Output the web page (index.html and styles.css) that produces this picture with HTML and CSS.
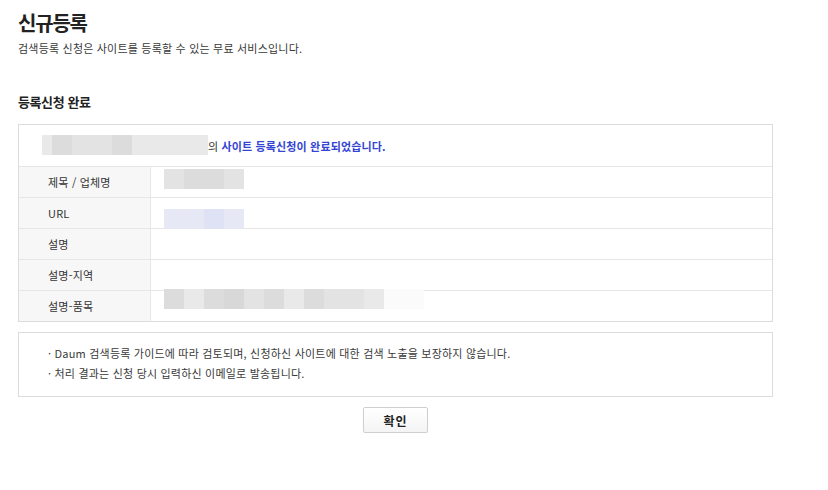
FILE: index.html
```html
<!DOCTYPE html>
<html lang="ko">
<head>
<meta charset="utf-8">
<title>신규등록</title>
<link rel="stylesheet" href="styles.css">
</head>
<body>
<div class="page">
  <h1 class="title">신규등록</h1>
  <p class="desc">검색등록 신청은 사이트를 등록할 수 있는 무료 서비스입니다.</p>

  <h2 class="section">등록신청 완료</h2>

  <div class="result">
    <div class="result-head">
      <span class="pix pix-head">
        <span class="c c3 w10"></span><span class="c c1"></span><span class="c c2"></span><span class="c c2"></span><span class="c c1"></span><span class="c c3"></span><span class="c c3"></span><span class="c c3 w36"></span>
      </span>
      <span class="head-text">의 <strong class="done">사이트 등록신청이 완료되었습니다.</strong></span>
    </div>
    <div class="row">
      <div class="label">제목 / 업체명</div>
      <div class="value">
        <span class="pix pix-name"><span class="c c2"></span><span class="c c1"></span><span class="c c1"></span><span class="c c2"></span></span>
      </div>
    </div>
    <div class="row">
      <div class="label">URL</div>
      <div class="value">
        <span class="pix pix-url"><span class="c b2"></span><span class="c b2"></span><span class="c b1"></span><span class="c b2"></span></span>
      </div>
    </div>
    <div class="row">
      <div class="label">설명</div>
      <div class="value"></div>
    </div>
    <div class="row">
      <div class="label">설명-지역</div>
      <div class="value"></div>
    </div>
    <div class="row">
      <div class="label">설명-품목</div>
      <div class="value">
        <span class="pix pix-item"><span class="c c1"></span><span class="c c3"></span><span class="c c1"></span><span class="c c0"></span><span class="c c2"></span><span class="c c1"></span><span class="c c3"></span><span class="c c1"></span><span class="c c2"></span><span class="c c2"></span><span class="c c3"></span><span class="c c4 w40"></span></span>
      </div>
    </div>
  </div>

  <div class="notice">
    <p>· Daum 검색등록 가이드에 따라 검토되며, 신청하신 사이트에 대한 검색 노출을 보장하지 않습니다.</p>
    <p>· 처리 결과는 신청 당시 입력하신 이메일로 발송됩니다.</p>
  </div>

  <div class="actions">
    <button class="btn" type="button">확인</button>
  </div>
</div>
</body>
</html>
```

FILE: styles.css
```css
* { box-sizing: border-box; }

html, body {
  margin: 0;
  padding: 0;
  background: #fff;
}

body {
  font-family: "Noto Sans CJK KR", "Noto Sans", sans-serif;
  color: #333;
}

.page {
  width: 791px;
  padding: 11px 0 0 18px;
}

.title {
  margin: 0;
  font-size: 20px;
  line-height: 24px;
  font-weight: 700;
  color: #222;
  letter-spacing: -1.2px;
}

.desc {
  margin: 5px 0 0;
  font-size: 11px;
  line-height: 16px;
  color: #3a3a3a;
  letter-spacing: 0.2px;
}

.section {
  margin: 37px 0 0;
  font-size: 13px;
  line-height: 18px;
  font-weight: 700;
  color: #222;
  letter-spacing: -0.4px;
}

.result {
  margin-top: 13px;
  width: 755px;
  border: 1px solid #dcdcdc;
  font-size: 11px;
}

.result-head {
  height: 42px;
  display: flex;
  align-items: center;
  padding-left: 23px;
  border-bottom: 1px solid #e6e6e6;
  color: #333;
}

.head-text { letter-spacing: 0.15px; }

.done {
  color: #3445d2;
  font-weight: 700;
}

.row {
  display: grid;
  grid-template-columns: 132px 1fr;
  grid-template-rows: minmax(0, 1fr);
  height: 31px;
  border-top: 1px solid #e6e6e6;
}

.row:nth-child(2) { border-top: 0; height: 30px; }

.label {
  background: #f7f7f7;
  border-right: 1px solid #e6e6e6;
  padding-left: 29px;
  display: flex;
  align-items: center;
  color: #333;
  letter-spacing: 0.2px;
}

.value {
  padding-left: 13px;
  min-height: 0;
  overflow: visible;
}

.pix {
  display: flex;
  height: 20px;
}

.pix-head { margin-top: -1px; }
.pix-name { margin-top: 2px; }
.pix-url  { margin-top: 11px; }
.pix-item { margin-top: -2px; }

.c { display: block; width: 20px; height: 100%; }
.w10 { width: 10px; }
.w36 { width: 36px; }
.w40 { width: 40px; }
.c0 { background: #d8d8d8; }
.c1 { background: #dcdcdc; }
.c2 { background: #e3e3e3; }
.c3 { background: #e9e9e9; }
.c4 { background: #fbfbfb; }
.b1 { background: #dfe2f5; }
.b2 { background: #e6e8f6; }

.notice {
  margin-top: 10px;
  width: 755px;
  border: 1px solid #dcdcdc;
  padding: 10px 0 13px 29px;
  font-size: 11px;
  color: #3a3a3a;
}

.notice p {
  margin: 0;
  line-height: 20px;
  letter-spacing: 0.2px;
}

.actions {
  width: 755px;
  display: flex;
  justify-content: center;
  margin-top: 10px;
}

.btn {
  width: 65px;
  height: 26px;
  padding: 0;
  border: 1px solid #cfcfcf;
  border-radius: 2px;
  background: linear-gradient(#ffffff, #f4f4f4);
  box-shadow: 0 1px 1px rgba(0, 0, 0, 0.08);
  font-family: "Noto Sans CJK KR", "Noto Sans", sans-serif;
  font-size: 12px;
  font-weight: 700;
  color: #222;
  letter-spacing: 1px;
  cursor: pointer;
}
```
